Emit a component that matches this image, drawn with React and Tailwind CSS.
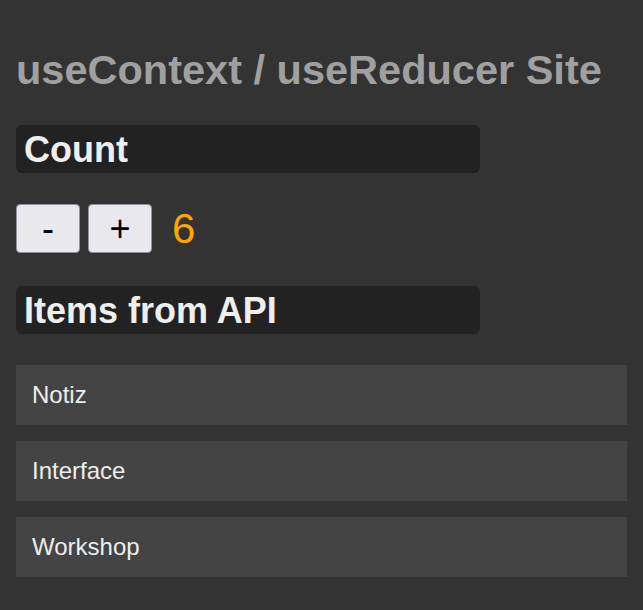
import React, { useReducer } from 'react'

const items = ['Notiz', 'Interface', 'Workshop']

function reducer (state, action) {
  switch (action.type) {
    case 'inc': return state + 1
    case 'dec': return state - 1
    default: return state
  }
}

export default function App () {
  const [count, dispatch] = useReducer(reducer, 6)

  return (
    <div className="min-h-screen bg-[#333] px-4 pt-[46px] pb-8 font-['Liberation_Sans',Arial,sans-serif]">
      <h1 className="text-[41.5px] leading-[48px] font-bold text-[#a0a0a0]">useContext / useReducer Site</h1>

      {/* Count */}
      <h2 className="mt-[31px] w-[464px] h-[48px] rounded-md bg-[#222] px-2 pt-[4px] text-[36px] leading-[41px] font-bold text-[#eee]">Count</h2>
      <div className="mt-[31px] flex items-center">
        <button
          onClick={() => dispatch({ type: 'dec' })}
          className="w-16 h-[49px] rounded-[4px] border border-[#8f8f9d] bg-[#e9e9ed] text-[36px] leading-none text-black"
        >-</button>
        <button
          onClick={() => dispatch({ type: 'inc' })}
          className="ml-2 w-16 h-[49px] rounded-[4px] border border-[#8f8f9d] bg-[#e9e9ed] text-[36px] leading-none text-black"
        >+</button>
        <span className="ml-[20px] text-[42px] leading-[46px] text-[#ffa500]">{count}</span>
      </div>

      {/* Items */}
      <h2 className="mt-[33px] w-[464px] h-[48px] rounded-md bg-[#222] px-2 pt-[4px] text-[36px] leading-[41px] font-bold text-[#eee]">Items from API</h2>
      <ul className="mt-[31px] flex flex-col gap-4">
        {items.map((it) => (
          <li key={it} className="h-[60px] bg-[#444] px-4 flex items-center text-[24px] text-[#eee]">{it}</li>
        ))}
      </ul>
    </div>
  )
}
